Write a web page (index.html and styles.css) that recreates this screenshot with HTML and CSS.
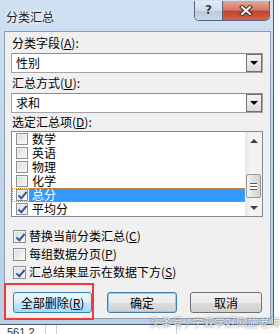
FILE: index.html
```html
<!DOCTYPE html>
<html lang="zh-CN">
<head>
    <meta charset="UTF-8">
    <title>分类汇总</title>
    <link rel="stylesheet" href="styles.css">
</head>
<body>
    <div class="screen">
        <!-- Dialog window -->
        <div class="window">
            <div class="titlebar">
                <span class="title">分类汇总</span>
                <div class="caption-buttons">
                    <span class="btn-help">?</span>
                    <span class="btn-close">
                        <svg width="14" height="11" viewBox="0 0 14 11">
                            <path d="M3 2 L11 9 M11 2 L3 9" stroke="#3b2a2a" stroke-width="4" stroke-linecap="square" fill="none"/>
                            <path d="M3 2 L11 9 M11 2 L3 9" stroke="#fff" stroke-width="2" stroke-linecap="square" fill="none"/>
                        </svg>
                    </span>
                </div>
            </div>

            <div class="client">
                <div class="label">分类字段(<u>A</u>):</div>
                <div class="combo">
                    <span class="combo-text">性别</span>
                    <span class="combo-arrow"></span>
                </div>

                <div class="label">汇总方式(<u>U</u>):</div>
                <div class="combo">
                    <span class="combo-text">求和</span>
                    <span class="combo-arrow"></span>
                </div>

                <div class="label label-list">选定汇总项(<u>D</u>):</div>
                <div class="listbox">
                    <ul class="items">
                        <li><span class="box"></span><span class="item-text">数学</span></li>
                        <li><span class="box"></span><span class="item-text">英语</span></li>
                        <li><span class="box"></span><span class="item-text">物理</span></li>
                        <li><span class="box"></span><span class="item-text">化学</span></li>
                        <li class="selected"><span class="box checked"></span><span class="item-text">总分</span></li>
                        <li><span class="box checked"></span><span class="item-text">平均分</span></li>
                    </ul>
                    <div class="scrollbar">
                        <span class="sb-btn"><span class="arrow-up"></span></span>
                        <div class="sb-track">
                            <span class="sb-thumb"><span class="grip"></span></span>
                        </div>
                        <span class="sb-btn"><span class="arrow-down"></span></span>
                    </div>
                </div>

                <div class="options">
                    <div class="option"><span class="check checked"></span>替换当前分类汇总(<u>C</u>)</div>
                    <div class="option"><span class="check"></span>每组数据分页(<u>P</u>)</div>
                    <div class="option"><span class="check checked"></span>汇总结果显示在数据下方(<u>S</u>)</div>
                </div>

                <div class="buttons">
                    <span class="button hot btn-remove">全部删除(<u>R</u>)</span>
                    <span class="button default btn-ok">确定</span>
                    <span class="button btn-cancel">取消</span>
                    <span class="marker"></span>
                </div>
            </div>
        </div>

        <!-- Sheet behind the dialog -->
        <div class="sheet">
            <span class="cell cell-a">561.2</span>
            <span class="cell cell-b"></span>
            <span class="cell cell-c"></span>
        </div>

        <div class="watermark">头条号 / 宁双学好网施老师</div>
    </div>
</body>
</html>
```

FILE: styles.css
```css
/* Global Styles */
body {
    margin: 0;
    padding: 0;
    font-family: "Noto Sans CJK SC", "Noto Sans", sans-serif;
    font-size: 12px;
    color: #000;
    background-color: #fff;
}

.screen {
    position: relative;
    width: 280px;
    height: 334px;
    overflow: hidden;
    background-color: #fff;
}

/* Window frame */
.window {
    width: 273px;
    height: 324px;
    border-right: 1px solid #4c5a6b;
    border-bottom: 1px solid #4c5a6b;
    background: linear-gradient(to bottom, #cfe0f2 0%, #c2d7ee 40%, #b8cfe8 100%);
    display: flex;
    flex-direction: column;
}

.titlebar {
    height: 31px;
    display: flex;
    justify-content: space-between;
    align-items: flex-start;
    flex-shrink: 0;
}

.title {
    margin: 9px 0 0 6px;
    line-height: 16px;
    font-size: 12px;
    color: #1a2230;
    text-shadow: 0 0 6px #fff, 0 0 3px #fff;
}

.caption-buttons {
    display: flex;
    margin: 1px 3px 0 0;
    height: 19px;
    border: 1px solid #5a6676;
    border-top: none;
    border-radius: 0 0 5px 5px;
    overflow: hidden;
}

.btn-help {
    width: 27px;
    border-right: 1px solid #5a6676;
    background: linear-gradient(to bottom, #e3ebf4 0%, #cfdbe8 50%, #b7c8dc 51%, #c9d8e8 100%);
    text-align: center;
    font-family: "DejaVu Sans", sans-serif;
    font-weight: bold;
    font-size: 12px;
    line-height: 19px;
    color: #2c3848;
    text-shadow: 0 0 2px #fff;
}

.btn-close {
    width: 46px;
    background: linear-gradient(to bottom, #e6a595 0%, #d67b69 45%, #c04530 55%, #d2624c 100%);
    display: flex;
    align-items: center;
    justify-content: center;
}

/* Client area */
.client {
    box-sizing: border-box;
    margin-left: 4px;
    width: 267px;
    height: 288px;
    border: 1px solid #8d9cae;
    background-color: #f0f0f0;
    padding: 1px 7px 0 6px;
}

.label {
    height: 20px;
    line-height: 20px;
    padding-left: 1px;
}

.label-list {
    height: 18px;
    line-height: 18px;
}

u {
    text-decoration: underline;
    text-underline-offset: 1px;
}

/* Combo boxes */
.combo {
    box-sizing: border-box;
    height: 20px;
    border: 1px solid #a4a4a4;
    border-top-color: #8e8e8e;
    background-color: #fff;
    display: flex;
    justify-content: space-between;
    align-items: stretch;
}

.combo-text {
    padding-left: 4px;
    line-height: 18px;
}

.combo-arrow {
    box-sizing: border-box;
    width: 16px;
    border: 1px solid #707070;
    background: linear-gradient(to bottom, #f4f4f4, #dcdcdc);
    display: flex;
    align-items: center;
    justify-content: center;
}

.combo-arrow::after {
    content: "";
    border-left: 4px solid transparent;
    border-right: 4px solid transparent;
    border-top: 4px solid #000;
}

/* List box */
.listbox {
    box-sizing: border-box;
    height: 86px;
    border: 1px solid #828790;
    background-color: #fff;
    display: flex;
}

.items {
    list-style-type: none;
    margin: 0;
    padding: 0;
    flex: 1;
}

.items li {
    height: 14px;
    line-height: 14px;
    display: flex;
    align-items: center;
}

.box {
    box-sizing: border-box;
    width: 12px;
    height: 12px;
    margin: 0 1px 0 4px;
    border: 1px solid #8e8f8f;
    background: linear-gradient(135deg, #d8d8d8 0%, #eeeeee 60%, #fbfbfb 100%);
    box-shadow: inset 0 0 0 1px #f4f4f4;
    position: relative;
}

.item-text {
    flex: 1;
    padding-left: 3px;
    height: 14px;
}

.items li.selected {
    outline: 1px dotted #c9893a;
    outline-offset: -1px;
}

.items li.selected .item-text {
    background-color: #3399ff;
    color: #fff;
}

/* Checkmarks */
.box.checked::after,
.check.checked::after {
    content: "";
    position: absolute;
    left: 3px;
    top: 0;
    width: 3px;
    height: 7px;
    border-right: 2px solid #39569a;
    border-bottom: 2px solid #39569a;
    transform: rotate(40deg);
}

/* Scrollbar */
.scrollbar {
    width: 17px;
    background: linear-gradient(to right, #e8e8e8, #f5f5f5 40%, #f0f0f0);
    display: flex;
    flex-direction: column;
}

.sb-btn {
    height: 17px;
    display: flex;
    align-items: center;
    justify-content: center;
}

.arrow-up {
    border-left: 4px solid transparent;
    border-right: 4px solid transparent;
    border-bottom: 4px solid #404040;
}

.arrow-down {
    border-left: 4px solid transparent;
    border-right: 4px solid transparent;
    border-top: 4px solid #404040;
}

.sb-track {
    flex: 1;
}

.sb-thumb {
    box-sizing: border-box;
    display: flex;
    align-items: center;
    justify-content: center;
    margin: 25px auto 0;
    width: 15px;
    height: 24px;
    border: 1px solid #9a9a9a;
    border-radius: 2px;
    background: linear-gradient(to right, #f2f2f2, #e0e0e0 50%, #d2d2d2);
}

.grip {
    width: 7px;
    height: 7px;
    background: repeating-linear-gradient(to bottom, #555 0, #555 1px, #fff 1px, #fff 3px);
}

/* Option check boxes */
.options {
    margin-top: 10px;
}

.option {
    height: 18px;
    line-height: 18px;
    display: flex;
    align-items: center;
    padding-left: 2px;
}

.check {
    box-sizing: border-box;
    width: 13px;
    height: 13px;
    margin-right: 3px;
    border: 1px solid #8e8f8f;
    background: linear-gradient(135deg, #d8d8d8 0%, #eeeeee 60%, #fbfbfb 100%);
    box-shadow: inset 0 0 0 1px #f4f4f4;
    position: relative;
}

.check.checked::after {
    left: 4px;
    top: 1px;
}

/* Buttons */
.buttons {
    margin-top: 11px;
    display: flex;
    position: relative;
}

.button {
    box-sizing: border-box;
    height: 21px;
    line-height: 19px;
    text-align: center;
    border: 1px solid #707070;
    border-radius: 3px;
    background: linear-gradient(to bottom, #f2f2f2 0%, #ebebeb 50%, #dddddd 51%, #cfcfcf 100%);
}

.button.hot {
    border-color: #3c7fb1;
    background: linear-gradient(to bottom, #eaf6fd 0%, #d9f0fc 50%, #bee6fd 51%, #a7d9f5 100%);
}

.button.default {
    border-color: #3c7fb1;
    box-shadow: inset 0 0 0 1px #8fd0f2;
}

.btn-remove {
    width: 79px;
    margin-left: 2px;
}

.btn-ok {
    width: 70px;
    margin-left: 15px;
}

.btn-cancel {
    width: 72px;
    margin-left: 13px;
}

/* Red annotation box around the first button */
.marker {
    position: absolute;
    left: -7px;
    top: -9px;
    width: 86px;
    height: 33px;
    border: 2px solid #f23a3a;
}

/* Spreadsheet behind */
.sheet {
    display: flex;
    height: 9px;
}

.cell {
    box-sizing: border-box;
    height: 9px;
    border-right: 1px solid #c9d2de;
}

.cell-a {
    width: 46px;
    padding-left: 7px;
    font-family: "Liberation Sans", Arial, sans-serif;
    font-size: 11px;
    line-height: 14px;
    color: #333;
    overflow: hidden;
}

.cell-b {
    width: 11px;
}

.cell-c {
    width: 120px;
}

.watermark {
    position: absolute;
    left: 150px;
    top: 315px;
    font-size: 11px;
    line-height: 14px;
    color: rgba(255, 255, 255, 0.8);
    text-shadow: 0 0 2px rgba(60, 60, 60, 0.8);
    white-space: nowrap;
}
```
